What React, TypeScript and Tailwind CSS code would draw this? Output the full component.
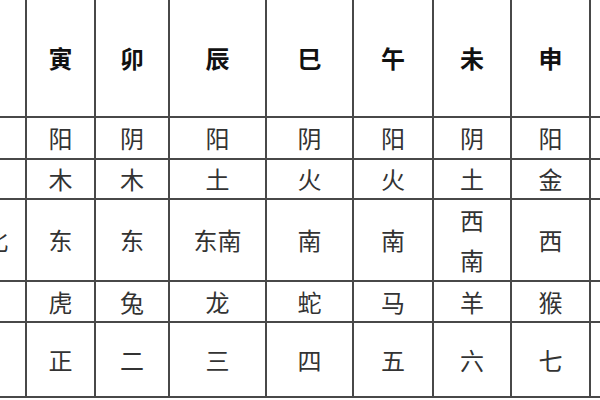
const columns = [
  { w: 'w-[82px]', cells: ['', '', '', '东北', '', ''] },
  { w: 'w-[67px]', cells: ['寅', '阳', '木', '东', '虎', '正'] },
  { w: 'w-[72px]', cells: ['卯', '阴', '木', '东', '兔', '二'] },
  { w: 'w-[95px]', cells: ['辰', '阳', '土', '东南', '龙', '三'] },
  { w: 'w-[85px]', cells: ['巳', '阴', '火', '南', '蛇', '四'] },
  { w: 'w-[78px]', cells: ['午', '阳', '火', '南', '马', '五'] },
  { w: 'w-[76px]', cells: ['未', '阴', '土', '西\n南', '羊', '六'] },
  { w: 'w-[77px]', cells: ['申', '阳', '金', '西', '猴', '七'] },
  { w: 'w-[77px]', cells: ['', '', '', '', '', ''] },
];

const rowHeights = ['h-[116px]', 'h-[40px]', 'h-[38px]', 'h-[80px]', 'h-[39px]', 'h-[73px]'];

export default function App() {
  return (
    <div className="w-[600px] h-[400px] overflow-hidden bg-white" style={{ fontFamily: '"Noto Sans CJK SC", "Noto Sans", sans-serif' }}>
      <div className="-ml-[57px] -mt-[2px] flex gap-[2px] bg-[#484848] py-[2px] w-max">
        {columns.map((col, ci) => (
          <div key={ci} className={`${col.w} flex flex-col gap-[2px]`}>
            {col.cells.map((text, ri) => (
              <div
                key={ri}
                className={`${rowHeights[ri]} bg-white flex items-center justify-center text-center whitespace-pre-line ${
                  ri === 0 ? 'text-[24px] font-bold text-[#111]' : 'text-[24px] text-[#333]'
                } ${text.includes('\n') ? 'leading-[40px]' : 'leading-none'}`}
              >
                {text}
              </div>
            ))}
          </div>
        ))}
      </div>
    </div>
  );
}
